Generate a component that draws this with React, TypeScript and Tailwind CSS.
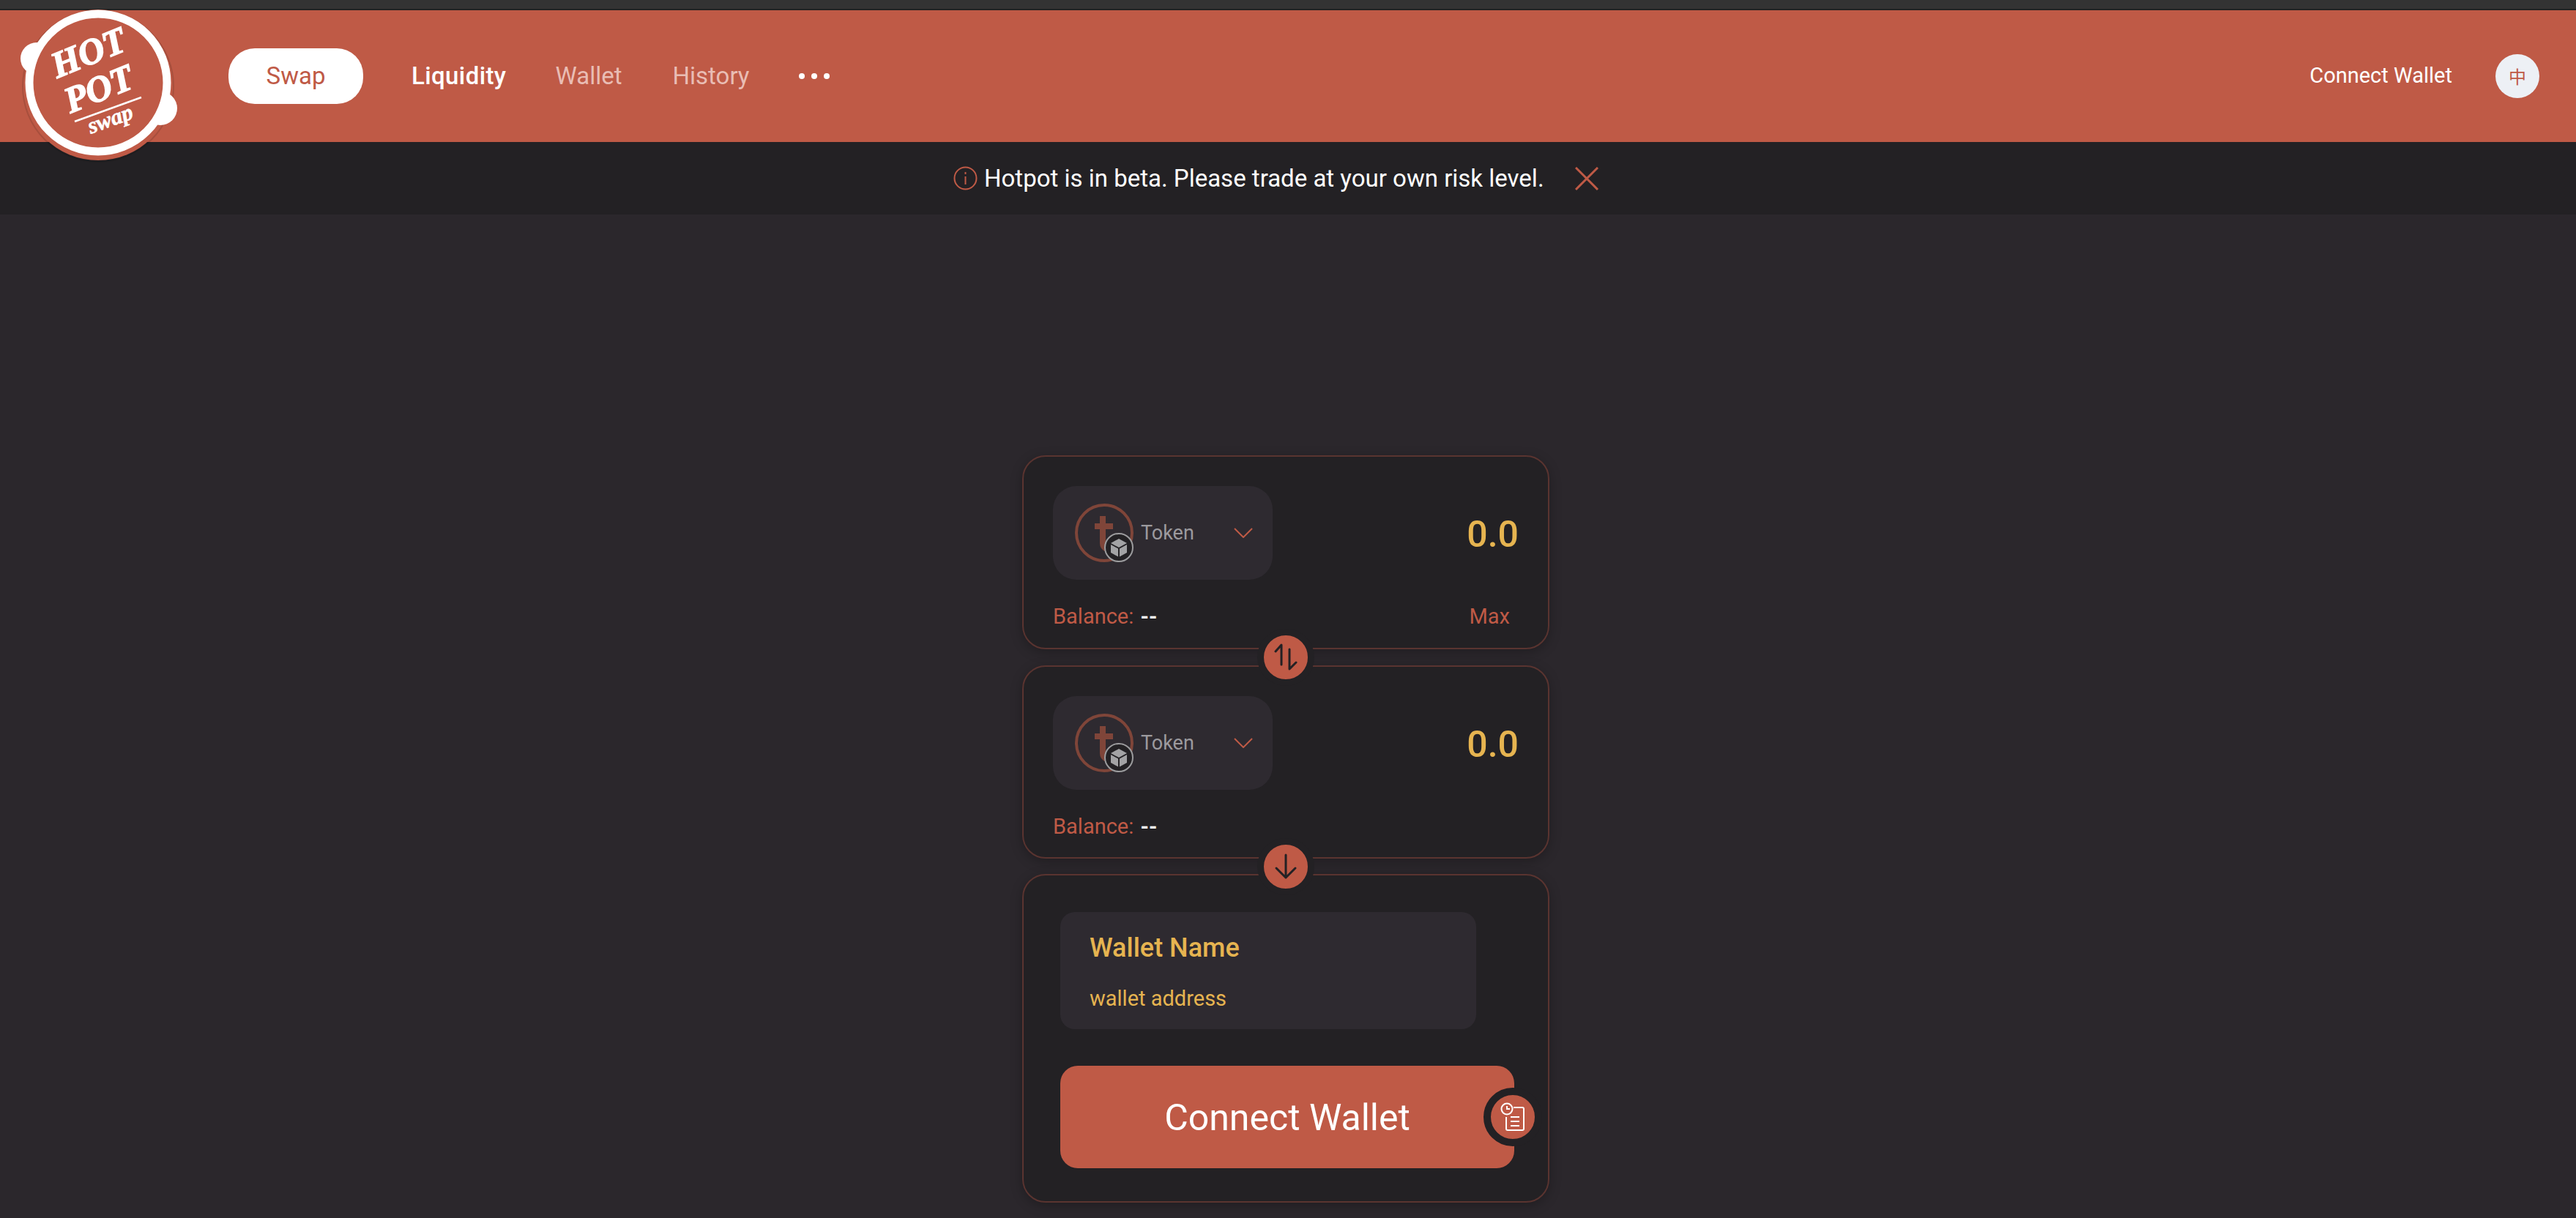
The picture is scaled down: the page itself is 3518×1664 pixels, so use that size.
import React from 'react'

const Logo = () => (
  <svg className="absolute left-0 top-0 z-20" width="260" height="230" viewBox="0 0 260 230">
    <circle cx="134" cy="116" r="103" fill="#bf5a46" />
    <circle cx="134" cy="118" r="103" fill="none" stroke="#000" strokeOpacity="0.12" strokeWidth="2" />
    <circle cx="50" cy="80" r="22" fill="#fff" />
    <circle cx="219" cy="148" r="23" fill="#fff" />
    <circle cx="134" cy="113" r="94" fill="#bf5a46" stroke="#fff" strokeWidth="11" />
    <g fill="#fff" stroke="#fff" strokeWidth="1.500" fontFamily="'Liberation Serif', serif" fontWeight="700" fontStyle="italic">
      <text x="78" y="107" fontSize="50" transform="rotate(-22 78 107)">HOT</text>
      <text x="96" y="155" fontSize="50" transform="rotate(-22 96 155)">POT</text>
      <text x="124" y="183" fontSize="31" strokeWidth="0.600" transform="rotate(-20 124 183)">swap</text>
    </g>
    <line x1="102" y1="166" x2="193" y2="133" stroke="#fff" strokeWidth="2.5" />
  </svg>
)

const TokenIcon = () => (
  <div className="relative w-[80px] h-[80px] shrink-0">
    <svg width="80" height="80" viewBox="0 0 80 80" fill="none" stroke="#7f4539">
      <circle cx="40" cy="40" r="38" strokeWidth="4" />
      <path d="M38 17 V54 Q38 60 44 62" strokeWidth="8" />
      <path d="M27 31 H52" strokeWidth="8" />
    </svg>
    <div className="absolute right-0 bottom-0 w-[40px] h-[40px] rounded-full border-2 border-[#9c9c9e] bg-[#232124] flex items-center justify-center">
      <svg width="24" height="26" viewBox="0 0 24 26" fill="#a3a3a5">
        <path d="M12 1 L23 7 L12 13 L1 7 Z" />
        <path d="M1 9 L11 14.500 V25.500 L1 20 Z" />
        <path d="M23 9 L13 14.500 V25.500 L23 20 Z" />
      </svg>
    </div>
  </div>
)

const TokenRow = () => (
  <div className="flex items-center justify-between">
    <div className="w-[300px] h-[128px] rounded-[32px] bg-[#2e2a30] flex items-center pl-[30px] pr-[27px]">
      <TokenIcon />
      <span className="ml-[10px] text-[27px] text-[#9c9a9e]">Token</span>
      <svg className="ml-auto" width="26" height="14" viewBox="0 0 26 14" fill="none" stroke="#bf5a46" strokeWidth="2">
        <path d="M1 1 L13 13 L25 1" />
      </svg>
    </div>
    <span className="text-[50px] leading-none font-medium text-[#e6b450] pt-[3px]">0.0</span>
  </div>
)

const BalanceRow = ({ max }: { max?: boolean }) => (
  <div className="mt-[33px] h-[36px] flex items-center justify-between text-[29px] text-[#bf5a46]">
    <span>
      Balance: <span className="text-white font-bold ml-[2px]">--</span>
    </span>
    {max && <span className="mr-[12px]">Max</span>}
  </div>
)

const Badge = ({ children }: { children: React.ReactNode }) => (
  <div className="absolute z-10 left-1/2 -translate-x-1/2 bottom-[-52px] w-[78px] h-[78px] rounded-full border-[9px] border-[#232124] bg-[#bf5a46] flex items-center justify-center">
    {children}
  </div>
)

const App = () => {
  return (
    <div className="min-h-screen bg-[#2b272c] text-white font-[Roboto,sans-serif] flex flex-col relative overflow-hidden">
      <div className="h-[14px] bg-[#333333] border-b-2 border-[#222222]" />
      <Logo />
      <header className="h-[180px] bg-[#bf5a46] flex items-center pl-[312px] pr-[50px] text-[33px]">
        <button className="w-[184px] h-[76px] rounded-[36px] bg-white text-[#bf5a46]">Swap</button>
        <span className="ml-[66px] font-medium tracking-[0.4px]">Liquidity</span>
        <span className="ml-[67px] text-[#e9bdb4]">Wallet</span>
        <span className="ml-[69px] text-[#e9bdb4]">History</span>
        <div className="ml-[68px] flex gap-[9px]">
          <span className="w-[8px] h-[8px] rounded-full bg-white" />
          <span className="w-[8px] h-[8px] rounded-full bg-white" />
          <span className="w-[8px] h-[8px] rounded-full bg-white" />
        </div>
        <span className="ml-auto text-[29px]">Connect Wallet</span>
        <div className="ml-[59px] w-[60px] h-[60px] rounded-full bg-[#edf0f5] text-[#bf5a46] text-[24px] flex items-center justify-center font-['Noto_Sans_CJK_SC',sans-serif]">
          中
        </div>
      </header>
      <div className="h-[99px] bg-[#232124] flex items-center pl-[1302px]">
        <svg width="33" height="33" viewBox="0 0 33 33" fill="none" stroke="#bf5a46" strokeWidth="2">
          <circle cx="16.500" cy="16.500" r="15" />
          <path d="M16.500 14 V25 M16.500 8 V11" />
        </svg>
        <span className="ml-[9px] text-[33px]">Hotpot is in beta. Please trade at your own risk level.</span>
        <svg className="ml-[42px]" width="32" height="32" viewBox="0 0 32 32" fill="none" stroke="#bf5a46" strokeWidth="3">
          <path d="M1 1 L31 31 M31 1 L1 31" />
        </svg>
      </div>

      <main className="flex justify-center pt-[329px] pb-[21px] pr-[6px]">
        <div className="w-[720px] flex flex-col">
          <section className="relative h-[265px] rounded-[32px] border-2 border-[#5a3430] bg-[#232124] px-[40px] pt-[40px] shadow-[0_4px_16px_rgba(0,0,0,0.25)]">
            <TokenRow />
            <BalanceRow max />
            <Badge>
              <svg width="32" height="38" viewBox="0 0 32 38" fill="none" stroke="#232124" strokeWidth="3" strokeLinecap="round" strokeLinejoin="round">
                <path d="M2 11 L10 2 V29" />
                <path d="M21 8 V35 L30 26" />
              </svg>
            </Badge>
          </section>
          <section className="relative mt-[22px] h-[264px] rounded-[32px] border-2 border-[#5a3430] bg-[#232124] px-[40px] pt-[40px] shadow-[0_4px_16px_rgba(0,0,0,0.25)]">
            <TokenRow />
            <BalanceRow />
            <Badge>
              <svg width="32" height="36" viewBox="0 0 32 36" fill="none" stroke="#232124" strokeWidth="3" strokeLinecap="round" strokeLinejoin="round">
                <path d="M16 2 V33 M3 20 L16 33 L29 20" />
              </svg>
            </Badge>
          </section>
          <section className="relative mt-[21px] h-[449px] rounded-[32px] border-2 border-[#5a3430] bg-[#232124] pl-[50px] pt-[50px] shadow-[0_4px_16px_rgba(0,0,0,0.25)]">
            <div className="w-[568px] h-[160px] rounded-[20px] bg-[#2e2a30] pl-[40px] pt-[26px] text-[#e6b450]">
              <div className="text-[36px] leading-[46px] font-medium">Wallet Name</div>
              <div className="mt-[28px] text-[29px] leading-[36px]">wallet address</div>
            </div>
            <div className="relative mt-[50px] w-[620px] h-[140px] rounded-[24px] bg-[#bf5a46] flex items-center justify-center text-[50px] pt-[2px]">
              Connect Wallet
              <div className="absolute right-[-38px] top-[30px] w-[80px] h-[80px] rounded-full border-[10px] border-[#232124] bg-[#bf5a46] flex items-center justify-center">
                <svg width="34" height="40" viewBox="0 0 34 40" fill="none" stroke="#fff" strokeWidth="2">
                  <path d="M18 7 H30 Q32 7 32 9 V36 Q32 38 30 38 H10 Q8 38 8 36 V20" />
                  <path d="M14 20 H26 M14 26 H26 M14 32 H26" />
                  <circle cx="9" cy="9" r="7.500" />
                  <path d="M9 5 V9 H13" />
                </svg>
              </div>
            </div>
          </section>
        </div>
      </main>
    </div>
  )
}

export default App
